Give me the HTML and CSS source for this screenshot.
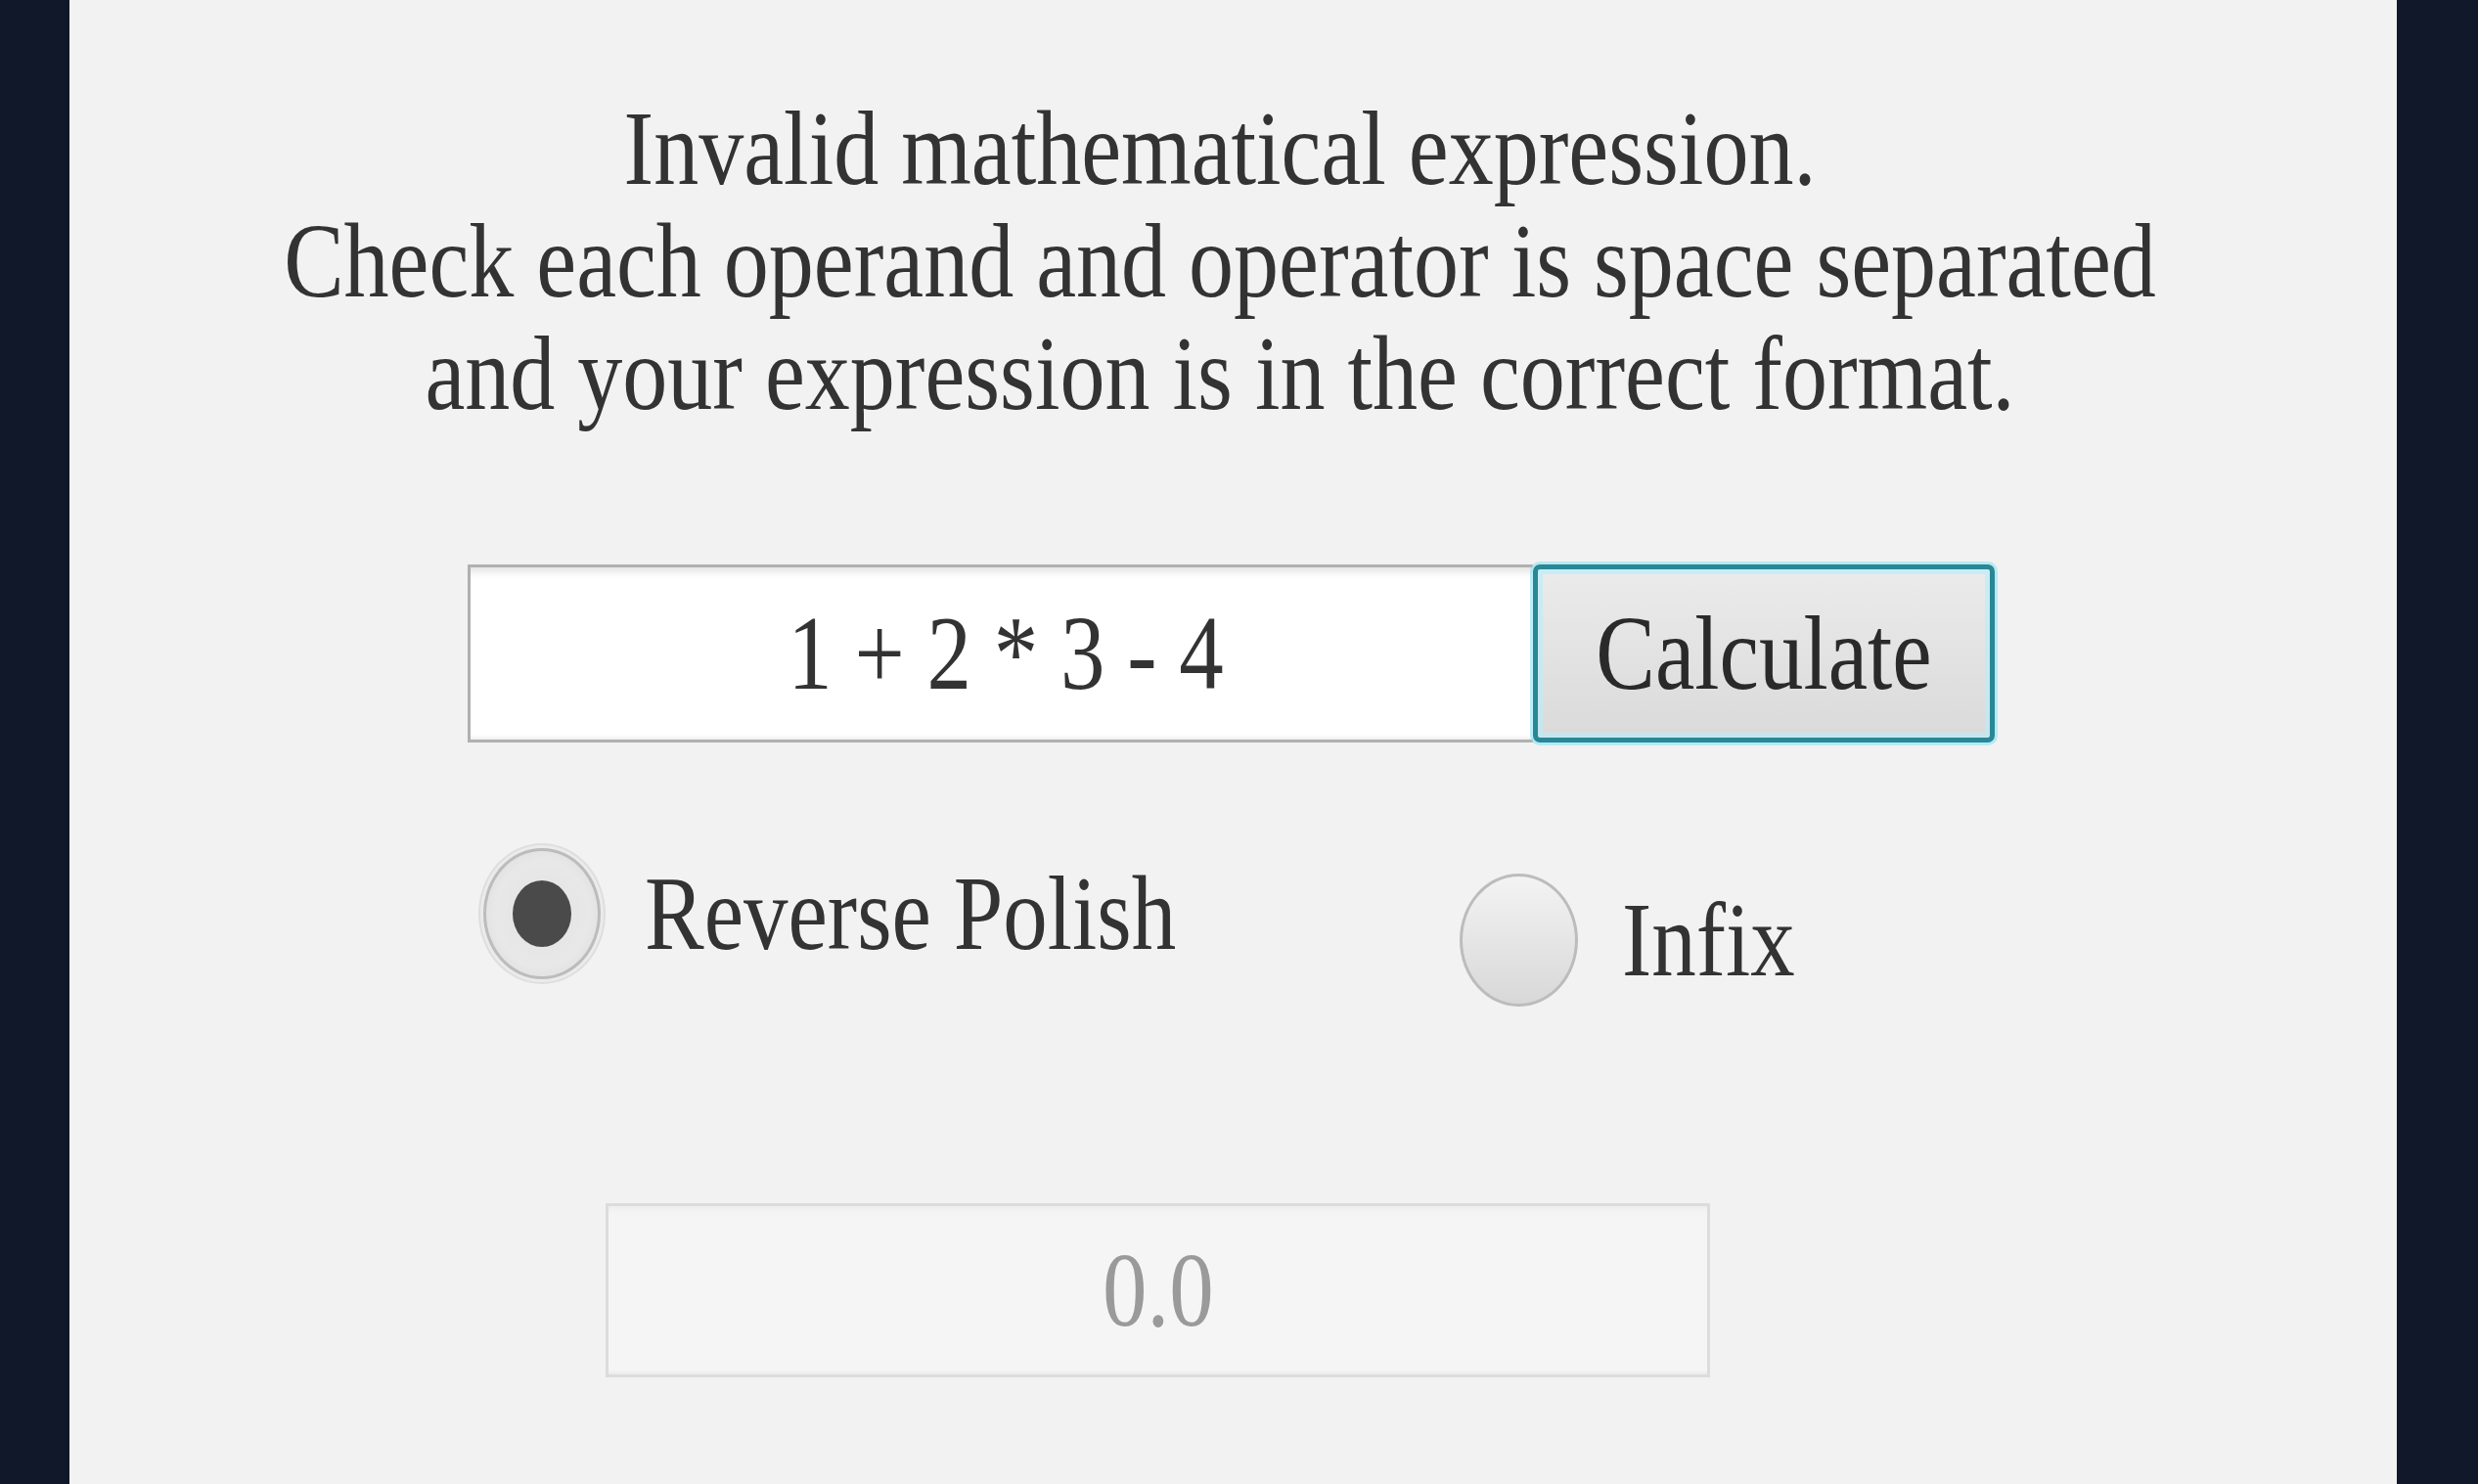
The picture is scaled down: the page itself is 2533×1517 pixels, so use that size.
FILE: index.html
```html
<!DOCTYPE html>
<html>
<head>
<meta charset="utf-8">
<link rel="stylesheet" href="styles.css">
</head>
<body>
<div class="panel">
  <p class="message">Invalid mathematical expression.<br>Check each operand and operator is space separated<br>and your expression is in the correct format.</p>
  <div class="input-row">
    <div class="expr-field"><span class="sx">1 + 2 * 3 - 4</span></div>
    <div class="calc-btn"><span class="sx">Calculate</span></div>
  </div>
  <div class="radio-row">
    <div class="radio-item rp">
      <div class="radio selected"><div class="dot"></div></div>
      <span class="label sx">Reverse Polish</span>
    </div>
    <div class="radio-item infix">
      <div class="radio"></div>
      <span class="label sx">Infix</span>
    </div>
  </div>
  <div class="result"><span class="sx">0.0</span></div>
</div>
</body>
</html>
```
FILE: styles.css
```css
html, body {
  margin: 0;
  padding: 0;
}
body {
  background: #10182a;
  width: 2533px;
  height: 1517px;
  overflow: hidden;
  font-family: "Liberation Serif", "Times New Roman", serif;
  color: #333333;
}
.panel {
  margin-left: 71px;
  width: 2379px;
  height: 1517px;
  background: #f2f2f2;
  display: flex;
  flex-direction: column;
  align-items: flex-start;
}
.sx {
  display: inline-block;
  transform: scaleX(0.85);
  transform-origin: center;
  white-space: nowrap;
}
.message {
  margin: 95px 0 0 0;
  width: 2352px;
  padding-right: 27px;
  font-size: 107px;
  line-height: 115px;
  text-align: center;
  transform: scaleX(0.86);
  transform-origin: 1176px 0;
}
.input-row {
  margin-top: 137px;
  margin-left: 407px;
  display: flex;
  height: 182px;
}
.expr-field {
  width: 1089px;
  height: 182px;
  box-sizing: border-box;
  background: #fff;
  border: 3px solid #b0b0b0;
  border-right: none;
  box-shadow: inset 0 10px 8px -6px rgba(0,0,0,0.12), inset 0 -5px 4px -3px rgba(0,0,0,0.07);
  display: flex;
  align-items: center;
  justify-content: center;
  font-size: 107px;
  padding-left: 8px;
}
.calc-btn {
  width: 472px;
  height: 182px;
  box-sizing: border-box;
  border: 5px solid #2a8795;
  border-radius: 7px;
  box-shadow: 0 0 0 3px rgba(140, 228, 245, 0.6), inset 0 0 0 5px rgba(185, 238, 250, 0.65);
  background: linear-gradient(#ebebeb, #dadada);
  display: flex;
  align-items: center;
  justify-content: center;
  font-size: 107px;
  color: #2a2a2a;
}
.radio-row {
  margin-top: 108px;
  margin-left: 423px;
  display: flex;
  align-items: flex-start;
}
.radio-item {
  display: flex;
  align-items: center;
  gap: 45px;
}
.radio-item.rp {
  width: 998px;
}
.radio-item.infix {
  margin-top: 26px;
}
.label {
  font-size: 107px;
  line-height: 118px;
  transform-origin: left center;
}
.radio {
  width: 121px;
  height: 136px;
  box-sizing: border-box;
  border-radius: 50%;
  border: 3px solid #bcbcbc;
  background: linear-gradient(#f3f3f3, #d8d8d8);
  display: flex;
  align-items: center;
  justify-content: center;
  flex-shrink: 0;
}
.radio.selected {
  width: 120px;
  height: 134px;
  background: radial-gradient(ellipse at center, #e2e2e2 0%, #e8e8e8 60%, #d6d6d6 100%);
  box-shadow: 0 0 0 3px #ebebeb, 0 0 0 5px #dedede;
}
.dot {
  width: 60px;
  height: 68px;
  border-radius: 50%;
  background: #4a4a4a;
}
.result {
  margin-top: 201px;
  margin-left: 548px;
  width: 1129px;
  height: 178px;
  box-sizing: border-box;
  background: #f5f5f5;
  border: 3px solid #dcdcdc;
  box-shadow: inset 0 10px 6px -6px rgba(0,0,0,0.03), inset 0 -6px 4px -4px rgba(0,0,0,0.05);
  display: flex;
  align-items: center;
  justify-content: center;
  font-size: 107px;
  color: #9a9a9a;
}
```
